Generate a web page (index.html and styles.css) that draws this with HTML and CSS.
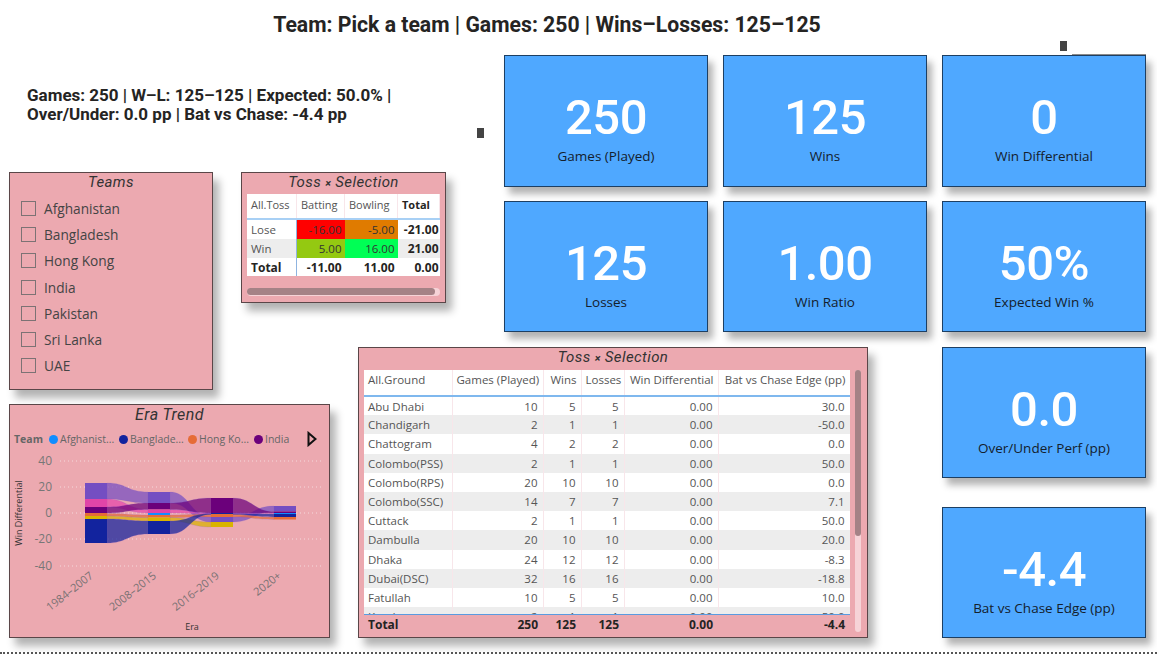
FILE: index.html
```html
<!DOCTYPE html>
<html lang="en">
  <head>
    <meta charset="UTF-8" />
    <meta name="viewport" content="width=device-width, initial-scale=1.0" />
    <title>Team Dashboard</title>
    <link rel="stylesheet" href="styles.css">
  </head>
  <body>
    <h1 class="page-title">Team: Pick a team | Games: 250 | Wins–Losses: 125–125</h1>

    <main class="canvas">
      <p class="summary">Games: 250 | W–L: 125–125 | Expected: 50.0% |<br>Over/Under: 0.0 pp | Bat vs Chase: -4.4 pp</p>

      <section class="card teams">
        <h2 class="card-title">Teams</h2>
        <ul class="team-list">
          <li><span class="check"></span>Afghanistan</li>
          <li><span class="check"></span>Bangladesh</li>
          <li><span class="check"></span>Hong Kong</li>
          <li><span class="check"></span>India</li>
          <li><span class="check"></span>Pakistan</li>
          <li><span class="check"></span>Sri Lanka</li>
          <li><span class="check"></span>UAE</li>
        </ul>
      </section>

      <section class="card toss">
        <h2 class="card-title">Toss <span class="times">×</span> Selection</h2>
        <table class="toss-table">
          <thead>
            <tr><th>All.Toss</th><th>Batting</th><th>Bowling</th><th class="strong">Total</th></tr>
          </thead>
          <tbody>
            <tr><td>Lose</td><td class="num red">-16.00</td><td class="num orange">-5.00</td><td class="num strong">-21.00</td></tr>
            <tr class="alt"><td>Win</td><td class="num lime">5.00</td><td class="num green">16.00</td><td class="num strong">21.00</td></tr>
            <tr class="strong"><td>Total</td><td class="num">-11.00</td><td class="num">11.00</td><td class="num">0.00</td></tr>
          </tbody>
        </table>
        <div class="hscroll"><div class="hscroll-thumb"></div></div>
      </section>

      <section class="kpi kpi-games"><div class="kpi-value">250</div><div class="kpi-label">Games (Played)</div></section>
      <section class="kpi kpi-wins"><div class="kpi-value">125</div><div class="kpi-label">Wins</div></section>
      <section class="kpi kpi-diff"><div class="kpi-value">0</div><div class="kpi-label">Win Differential</div></section>
      <section class="kpi kpi-losses"><div class="kpi-value">125</div><div class="kpi-label">Losses</div></section>
      <section class="kpi kpi-ratio"><div class="kpi-value">1.00</div><div class="kpi-label">Win Ratio</div></section>
      <section class="kpi kpi-expected"><div class="kpi-value">50%</div><div class="kpi-label">Expected Win %</div></section>
      <section class="kpi kpi-perf"><div class="kpi-value">0.0</div><div class="kpi-label">Over/Under Perf (pp)</div></section>
      <section class="kpi kpi-edge"><div class="kpi-value">-4.4</div><div class="kpi-label">Bat vs Chase Edge (pp)</div></section>

      <section class="card era">
        <h2 class="card-title era-title">Era Trend</h2>
        <div class="legend">
          <b class="legend-name">Team</b>
          <span class="legend-item item-a"><i class="dot dot-blue"></i>Afghanist...</span>
          <span class="legend-item item-b"><i class="dot dot-navy"></i>Banglade...</span>
          <span class="legend-item item-c"><i class="dot dot-orange"></i>Hong Ko...</span>
          <span class="legend-item item-d"><i class="dot dot-purple"></i>India</span>
          <svg class="legend-next" width="10" height="16" viewBox="0 0 10 16"><path d="M1.5 2 L8.5 8 L1.5 14 Z" fill="none" stroke="#111" stroke-width="2"/></svg>
        </div>
        <svg class="chart" width="319" height="185" viewBox="10 452 319 185">
          <g class="grid-lines">
            <line x1="60" x2="322" y1="461" y2="461"/>
            <line x1="60" x2="322" y1="487" y2="487"/>
            <line x1="60" x2="322" y1="513" y2="513"/>
            <line x1="60" x2="322" y1="539" y2="539"/>
            <line x1="60" x2="322" y1="566" y2="566"/>
          </g>
          <g class="y-ticks">
            <text x="52" y="465">40</text>
            <text x="52" y="491">20</text>
            <text x="52" y="517">0</text>
            <text x="52" y="543">-20</text>
            <text x="52" y="570">-40</text>
          </g>
          <g class="x-ticks">
            <text transform="translate(94 577) rotate(-38)">1984–2007</text>
            <text transform="translate(157 577) rotate(-38)">2008–2015</text>
            <text transform="translate(220 577) rotate(-38)">2016–2019</text>
            <text transform="translate(282 577) rotate(-38)">2020+</text>
          </g>
          <text class="axis-name" transform="translate(22 513) rotate(-90)">Win Differential</text>
          <text class="axis-name" x="192" y="630">Era</text>

          <!-- ribbons -->
          <g class="ribbon ribbon-purple">
            <path d="M107 483 C127 483 127 492 148 492 L148 503 C127 503 127 499 107 499 Z"/>
            <path d="M170 492 C190 492 190 517 211 517 L211 522 C190 522 190 503 170 503 Z"/>
            <path d="M233 517 C253 517 253 506 274 506 L274 511.5 C253 511.5 253 522 233 522 Z"/>
          </g>
          <g class="ribbon ribbon-pink">
            <path d="M107 499 C127 499 127 509.5 148 509.5 L148 513 C127 513 127 507 107 507 Z"/>
            <path d="M170 509.5 C190 509.5 190 513 211 513 L211 514 C190 514 190 513 170 513 Z"/>
            <path d="M233 513 C253 513 253 513 274 513 L274 513.5 C253 513.5 253 514 233 514 Z"/>
          </g>
          <g class="ribbon ribbon-dark">
            <path d="M107 507 C127 507 127 503 148 503 L148 509.5 C127 509.5 127 513 107 513 Z"/>
            <path d="M170 503 C190 503 190 498 211 498 L211 513 C190 513 190 509.5 170 509.5 Z"/>
            <path d="M233 498 C253 498 253 511.5 274 511.5 L274 513 C253 513 253 513 233 513 Z"/>
          </g>
          <g class="ribbon ribbon-orange">
            <path d="M107 513.5 C127 513.5 127 515 148 515 L148 517.5 C127 517.5 127 516 107 516 Z"/>
            <path d="M170 515 C190 515 190 514 211 514 L211 517 C190 517 190 517.5 170 517.5 Z"/>
            <path d="M233 514 C253 514 253 517 274 517 L274 519.5 C253 519.5 253 517 233 517 Z"/>
          </g>
          <g class="ribbon ribbon-yellow">
            <path d="M107 516 C127 516 127 517.5 148 517.5 L148 521 C127 521 127 519 107 519 Z"/>
            <path d="M170 517.5 C190 517.5 190 522 211 522 L211 527 C190 527 190 521 170 521 Z"/>
          </g>
          <g class="ribbon ribbon-navy">
            <path d="M107 519 C127 519 127 521 148 521 L148 534 C127 534 127 543 107 543 Z"/>
            <path d="M170 521 C190 521 190 513.5 211 513.5 L211 514.5 C190 514.5 190 534 170 534 Z"/>
            <path d="M233 513.5 C253 513.5 253 514 274 514 L274 517 C253 517 253 514.5 233 514.5 Z"/>
          </g>

          <!-- era bars -->
          <g class="bars">
            <rect class="b-purple" x="85" y="483" width="22" height="16"/>
            <rect class="b-pink" x="85" y="499" width="22" height="8"/>
            <rect class="b-dark" x="85" y="507" width="22" height="6"/>
            <rect class="b-orange" x="85" y="513" width="22" height="3"/>
            <rect class="b-yellow" x="85" y="516" width="22" height="3"/>
            <rect class="b-navy" x="85" y="519" width="22" height="24"/>

            <rect class="b-purple" x="148" y="492" width="22" height="11"/>
            <rect class="b-dark" x="148" y="503" width="22" height="6.5"/>
            <rect class="b-pink" x="148" y="509.5" width="22" height="3.5"/>
            <rect class="b-blue" x="148" y="513" width="22" height="2"/>
            <rect class="b-orange" x="148" y="515" width="22" height="2.5"/>
            <rect class="b-yellow" x="148" y="517.5" width="22" height="3.5"/>
            <rect class="b-navy" x="148" y="521" width="22" height="13"/>

            <rect class="b-dark" x="211" y="498" width="22" height="15"/>
            <rect class="b-navy" x="211" y="513" width="22" height="1"/>
            <rect class="b-orange" x="211" y="514" width="22" height="3"/>
            <rect class="b-purple" x="211" y="517" width="22" height="5"/>
            <rect class="b-yellow" x="211" y="522" width="22" height="5"/>

            <rect class="b-purple" x="274" y="506" width="22" height="5.5"/>
            <rect class="b-dark" x="274" y="511.5" width="22" height="1.5"/>
            <rect class="b-blue" x="274" y="513" width="22" height="1"/>
            <rect class="b-navy" x="274" y="514" width="22" height="3"/>
            <rect class="b-orange" x="274" y="517" width="22" height="2.5"/>
          </g>
        </svg>
      </section>

      <section class="card ground">
        <h2 class="card-title">Toss <span class="times">×</span> Selection</h2>
        <div class="ground-body">
          <div class="ground-tables">
            <div class="ground-clip">
              <table class="ground-table">
                <colgroup><col class="c1"><col class="c2"><col class="c3"><col class="c4"><col class="c5"><col class="c6"></colgroup>
                <thead>
                  <tr><th>All.Ground</th><th>Games (Played)</th><th>Wins</th><th>Losses</th><th>Win Differential</th><th>Bat vs Chase Edge (pp)</th></tr>
                </thead>
                <tbody>
                  <tr><td>Abu Dhabi</td><td>10</td><td>5</td><td>5</td><td>0.00</td><td>30.0</td></tr>
                  <tr><td>Chandigarh</td><td>2</td><td>1</td><td>1</td><td>0.00</td><td>-50.0</td></tr>
                  <tr><td>Chattogram</td><td>4</td><td>2</td><td>2</td><td>0.00</td><td>0.0</td></tr>
                  <tr><td>Colombo(PSS)</td><td>2</td><td>1</td><td>1</td><td>0.00</td><td>50.0</td></tr>
                  <tr><td>Colombo(RPS)</td><td>20</td><td>10</td><td>10</td><td>0.00</td><td>0.0</td></tr>
                  <tr><td>Colombo(SSC)</td><td>14</td><td>7</td><td>7</td><td>0.00</td><td>7.1</td></tr>
                  <tr><td>Cuttack</td><td>2</td><td>1</td><td>1</td><td>0.00</td><td>50.0</td></tr>
                  <tr><td>Dambulla</td><td>20</td><td>10</td><td>10</td><td>0.00</td><td>20.0</td></tr>
                  <tr><td>Dhaka</td><td>24</td><td>12</td><td>12</td><td>0.00</td><td>-8.3</td></tr>
                  <tr><td>Dubai(DSC)</td><td>32</td><td>16</td><td>16</td><td>0.00</td><td>-18.8</td></tr>
                  <tr><td>Fatullah</td><td>10</td><td>5</td><td>5</td><td>0.00</td><td>10.0</td></tr>
                  <tr><td>Kandy</td><td>2</td><td>1</td><td>1</td><td>0.00</td><td>50.0</td></tr>
                </tbody>
              </table>
            </div>
            <table class="ground-table ground-total">
              <colgroup><col class="c1"><col class="c2"><col class="c3"><col class="c4"><col class="c5"><col class="c6"></colgroup>
              <tr><td>Total</td><td>250</td><td>125</td><td>125</td><td>0.00</td><td>-4.4</td></tr>
            </table>
          </div>
          <div class="vscroll"><div class="vscroll-thumb"></div></div>
        </div>
      </section>

      <span class="handle handle-left"></span>
      <span class="handle handle-top"></span>
      <span class="handle-line"></span>
    </main>
  </body>
</html>
```

FILE: styles.css
```css
html,
body {
  margin: 0;
  height: 655px;
  overflow: hidden;
  background-color: #fff;
}
body {
  font-family: "Open Sans", Arial, sans-serif;
  color: #333;
  position: relative;
}
.page-title {
  margin: 0;
  width: 1094px;
  height: 55px;
  padding-top: 11px;
  box-sizing: border-box;
  text-align: center;
  font-family: Roboto, Arial, sans-serif;
  font-size: 21.2px;
  line-height: 28px;
  font-weight: 700;
  color: #252423;
}
.canvas {
  position: relative;
  display: grid;
  margin-left: 9px;
  width: 1137px;
  grid-template-columns: 204px 28px 89px 28px 88px 58px 204px 15px 204px 15px 204px;
  grid-template-rows: 117px 15px 14px 102px 29px 15px 43px 14px 74px 29px 131px;
}
.canvas::after {
  content: "";
  position: absolute;
  left: -9px;
  top: 597px;
  width: 1157px;
  border-top: 2px dotted #555;
}

/* summary text */
.summary {
  grid-column: 1 / 6;
  grid-row: 1;
  margin: 0;
  padding: 31px 0 0 18px;
  font-family: Roboto, Arial, sans-serif;
  font-size: 17px;
  line-height: 19px;
  font-weight: 700;
  color: #252423;
}

/* kpi cards */
.kpi {
  display: flex;
  flex-direction: column;
  align-items: center;
  box-sizing: border-box;
  padding-top: 33px;
  background-color: #4fa8ff;
  border: 1px solid #1d3f63;
  box-shadow: 5px 7px 7px rgba(0, 0, 0, 0.3);
}
.kpi-value {
  font-family: Roboto, Arial, sans-serif;
  font-size: 49px;
  line-height: 58px;
  font-weight: 500;
  letter-spacing: -0.5px;
  color: #fff;
}
.kpi-label {
  font-size: 13.5px;
  line-height: 18px;
  color: #14202c;
}
.kpi-games { grid-column: 7; grid-row: 1 / 3; }
.kpi-wins { grid-column: 9; grid-row: 1 / 3; }
.kpi-diff { grid-column: 11; grid-row: 1 / 3; }
.kpi-games, .kpi-wins, .kpi-diff { height: 132px; grid-row: 1 / 4; }
.kpi-losses { grid-column: 7; grid-row: 4 / 6; }
.kpi-ratio { grid-column: 9; grid-row: 4 / 6; }
.kpi-expected { grid-column: 11; grid-row: 4 / 6; }
.kpi-perf { grid-column: 11; grid-row: 7 / 10; }
.kpi-edge { grid-column: 11; grid-row: 11; }

/* pink cards */
.card {
  box-sizing: border-box;
  background-color: #eca9b0;
  border: 1px solid #5a4648;
  box-shadow: 6px 8px 8px rgba(0, 0, 0, 0.3);
}
.card-title {
  margin: 0;
  height: 19px;
  text-align: center;
  font-family: Roboto, Arial, sans-serif;
  font-size: 15px;
  line-height: 19px;
  font-weight: 400;
  font-style: italic;
  letter-spacing: 0.4px;
  color: #333;
}
.times {
  font-size: 11px;
  font-weight: 700;
}

/* teams slicer */
.teams {
  grid-column: 1;
  grid-row: 3 / 8;
  height: 218px;
  align-self: start;
  margin-top: -15px;
}
.team-list {
  list-style: none;
  margin: 0;
  padding: 3px 0 0 11px;
}
.team-list li {
  display: flex;
  align-items: center;
  height: 26.3px;
  font-size: 13.7px;
  color: #444;
}
.check {
  width: 13px;
  height: 13px;
  margin-right: 8px;
  border: 1.5px solid #7c7274;
}

/* small matrix */
.toss {
  grid-column: 3 / 6;
  grid-row: 3 / 6;
  height: 131px;
  width: 205px;
  align-self: start;
  margin-top: -15px;
  padding: 0 5px;
}
.toss-table {
  width: 193px;
  table-layout: fixed;
  border-collapse: collapse;
  background-color: #fff;
  font-size: 11.5px;
  color: #555;
  margin-top: 2px;
}
.toss-table th {
  height: 21px;
  padding: 3px 4px 0;
  vertical-align: top;
  text-align: left;
  font-size: 11px;
  font-weight: 400;
  border-right: 1px solid #f8e6ea;
  border-bottom: 2px solid #a8d0f5;
}
.toss-table th:first-child { width: 41px; }
.toss-table th:nth-child(2) { width: 39px; }
.toss-table th:nth-child(3) { width: 44px; }
.toss-table td {
  height: 19px;
  padding: 0 3px 0 4px;
}
.toss-table tr:last-child td {
  height: 18px;
}
.toss-table td:first-child {
  border-right: 1px solid #8fb4e0;
}
.toss-table .alt { background-color: #ededed; }
.toss-table .num {
  text-align: right;
  color: #333;
}
.toss-table th.strong {
  font-weight: 700;
  color: #252423;
}
.toss-table td.strong,
.toss-table .strong td {
  font-size: 12px;
  font-weight: 700;
  color: #252423;
}
.toss-table td.strong,
.toss-table .strong td {
  padding-right: 1px;
}
.toss-table .strong td:nth-child(-n+3) {
  padding-right: 3px;
}
.toss-table .red { background-color: #ff0000; }
.toss-table .orange { background-color: #e07b00; }
.toss-table .lime { background-color: #94c911; }
.toss-table .green { background-color: #00ff55; }
.hscroll {
  width: 193px;
  height: 8px;
  margin-top: 12px;
  border-radius: 4px;
  background-color: #f6d3d7;
}
.hscroll-thumb {
  width: 188px;
  height: 7px;
  border-radius: 4px;
  background-color: #a58286;
}

/* era chart */
.era {
  grid-column: 1 / 4;
  grid-row: 9 / 12;
}
.era-title {
  height: 21px;
  font-size: 16px;
  line-height: 20px;
}
.legend {
  position: relative;
  display: flex;
  align-items: center;
  height: 26px;
  padding-left: 4px;
  font-size: 10.5px;
  color: #666;
}
.legend-name {
  width: 35px;
  font-weight: 700;
}
.legend-item {
  display: flex;
  align-items: center;
  gap: 2px;
  white-space: nowrap;
}
.item-a { width: 70px; }
.item-b { width: 69px; }
.item-c { width: 66px; }
.item-d { width: 44px; }
.dot {
  width: 9px;
  height: 9px;
  border-radius: 50%;
}
.dot-blue { background-color: #118dff; }
.dot-navy { background-color: #12239e; }
.dot-orange { background-color: #e66c37; }
.dot-purple { background-color: #6b007b; }
.legend-next {
  margin-left: 9px;
}
.chart {
  display: block;
}
.grid-lines line {
  stroke: #f5d9dc;
  stroke-width: 1;
  stroke-dasharray: 1 3;
}
.y-ticks text {
  font-size: 12px;
  fill: #777;
  text-anchor: end;
}
.x-ticks text {
  font-size: 11px;
  fill: #7b7274;
  text-anchor: end;
}
.axis-name {
  font-size: 9px;
  fill: #333;
  text-anchor: middle;
}
.ribbon path {
  fill-opacity: 0.72;
  stroke: #7a55c8;
  stroke-opacity: 0.35;
  stroke-width: 0.5;
}
.ribbon-purple path { fill: #744ec2; }
.ribbon-pink path { fill: #e645ab; }
.ribbon-dark path { fill: #6b007b; }
.ribbon-orange path { fill: #e66c37; }
.ribbon-yellow path { fill: #d9b300; }
.ribbon-navy path { fill: #12239e; }
.b-purple { fill: #744ec2; }
.b-pink { fill: #e045a8; }
.b-dark { fill: #6b007b; }
.b-orange { fill: #e66c37; }
.b-yellow { fill: #d9b300; }
.b-navy { fill: #12239e; }
.b-blue { fill: #118dff; }

/* ground table */
.ground {
  grid-column: 5 / 11;
  grid-row: 7 / 12;
  width: 510px;
  padding: 0 5px;
}
.ground-body {
  display: flex;
  gap: 5px;
  margin-top: 3px;
}
.ground-tables {
  width: 486px;
}
.ground-clip {
  height: 244px;
  overflow: hidden;
  border-bottom: 1px solid #5a9be0;
  background-color: #fff;
}
.ground-table {
  width: 486px;
  table-layout: fixed;
  border-collapse: collapse;
  font-size: 11.5px;
  color: #555;
}
.c1 { width: 88px; }
.c2 { width: 91px; }
.c3 { width: 38px; }
.c4 { width: 43px; }
.c5 { width: 94px; }
.c6 { width: 132px; }
.ground-table th {
  height: 23px;
  padding: 2px 4px 0 4px;
  vertical-align: top;
  text-align: right;
  font-weight: 400;
  white-space: nowrap;
  border-right: 1px solid #f8e6ea;
  border-bottom: 2px solid #7fb8ee;
}
.ground-table th:first-child { text-align: left; }
.ground-table td {
  height: 19.2px;
  padding: 0 5px 0 4px;
  text-align: right;
  border-right: 1px solid #f8e6ea;
  box-sizing: border-box;
}
.ground-table td:first-child { text-align: left; }
.ground-table tbody tr:nth-child(even) { background-color: #ededed; }
.ground-total td {
  height: 19px;
  font-size: 12px;
  font-weight: 700;
  color: #252423;
  border-right: none;
}
.vscroll {
  width: 6px;
  height: 262px;
  border-radius: 3px;
  background-color: #f6d3d7;
}
.vscroll-thumb {
  height: 166px;
  border-radius: 3px;
  background-color: #a58286;
}

/* stray selection handles sitting on the canvas */
.handle {
  position: absolute;
  width: 7px;
  height: 10px;
  background-color: #444;
}
.handle-left {
  left: 468px;
  top: 73px;
}
.handle-top {
  left: 1051px;
  top: -14px;
}
.handle-line {
  position: absolute;
  left: 1063px;
  top: -1px;
  width: 74px;
  border-top: 1px solid #8a8a8a;
}
```
